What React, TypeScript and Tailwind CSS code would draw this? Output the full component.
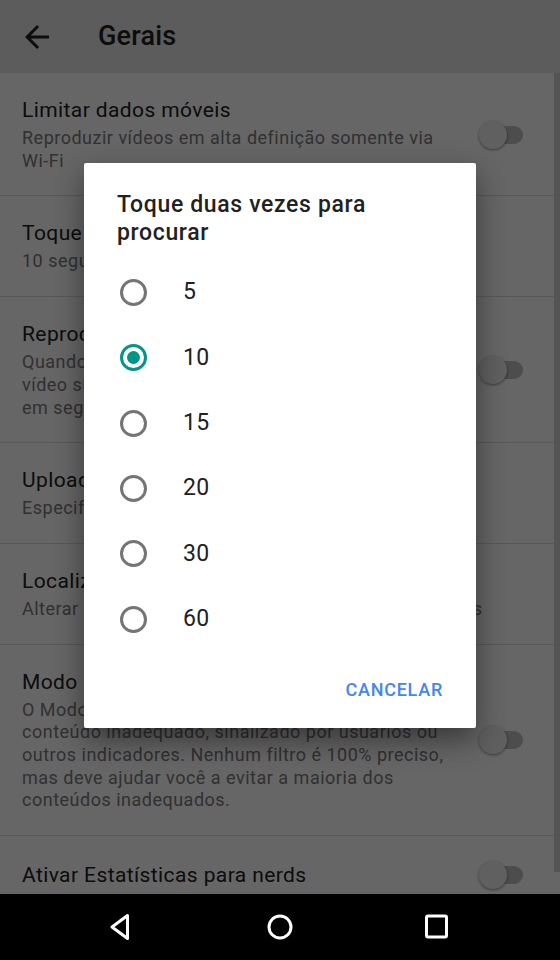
import React from "react";

const Toggle = () => (
  <div className="relative w-[44px] h-[30px] shrink-0">
    <div className="absolute left-[7px] top-[6px] w-[37px] h-[18px] rounded-full bg-[#c0c0c0]" />
    <div className="absolute left-0 top-[1px] w-[28px] h-[28px] rounded-full bg-[#f1f1f1] shadow-[0_1px_3px_rgba(0,0,0,0.45)]" />
  </div>
);

type RowProps = { title: string; lines?: string[]; toggle?: boolean };

const Row = ({ title, lines = [], toggle }: RowProps) => (
  <div className="flex items-center justify-between pl-[22px] pr-[37px] pt-[24px] pb-[23px] border-b border-[#dedede]">
    <div className={toggle ? "w-[440px]" : "w-[520px]"}>
      <div className="text-[21px] leading-[26px] tracking-[0.4px] text-[#212121] whitespace-nowrap">{title}</div>
      {lines.length > 0 && (
        <div className="mt-[4px] text-[18px] leading-[22.7px] tracking-[0.5px] text-[#7a7a7a]">
          {lines.map((l, i) => (
            <div key={i} className="whitespace-nowrap">{l}</div>
          ))}
        </div>
      )}
    </div>
    {toggle && <Toggle />}
  </div>
);

const Radio = ({ checked }: { checked?: boolean }) =>
  checked ? (
    <div className="w-[27px] h-[27px] rounded-full border-[3px] border-[#009688] flex items-center justify-center">
      <div className="w-[13px] h-[13px] rounded-full bg-[#009688]" />
    </div>
  ) : (
    <div className="w-[27px] h-[27px] rounded-full border-[3px] border-[#757575]" />
  );

export default function App() {
  const options = ["5", "10", "15", "20", "30", "60"];
  return (
    <div
      className="relative w-[560px] h-[960px] overflow-hidden bg-white"
      style={{ fontFamily: "Roboto, 'Noto Sans', Arial, sans-serif" }}
    >
      <div className="flex flex-col h-[894px]">
        {/* App bar */}
        <div className="h-[73px] shrink-0 bg-[#e6e6e6] flex items-center">
          <svg
            viewBox="0 0 24 24"
            className="w-[36px] h-[36px] ml-[19px]"
            fill="#212121"
          >
            <path d="M20 11H7.83l5.59-5.59L12 4l-8 8 8 8 1.41-1.41L7.83 13H20v-2z" />
          </svg>
          <div className="ml-[43px] text-[27px] tracking-[0.2px] font-medium text-[#212121]">Gerais</div>
        </div>

        {/* Settings list */}
        <div className="flex-1 bg-white">
          <Row
            title="Limitar dados móveis"
            lines={["Reproduzir vídeos em alta definição somente via", "Wi-Fi"]}
            toggle
          />
          <Row title="Toque duas vezes para procurar" lines={["10 segundos"]} />
          <Row
            title="Reprodução automática"
            lines={[
              "Quando um vídeo terminar, o próximo",
              "vídeo sugerido será reproduzido",
              "em seguida automaticamente",
            ]}
            toggle
          />
          <Row title="Uploads" lines={["Especificar preferências de rede para uploads"]} />
          <Row
            title="Localização"
            lines={["Alterar a região para ver os conteúdos e as tendências"]}
          />
          <Row
            title="Modo restrito"
            lines={[
              "O Modo restrito oculta vídeos que podem conter",
              "conteúdo inadequado, sinalizado por usuários ou",
              "outros indicadores. Nenhum filtro é 100% preciso,",
              "mas deve ajudar você a evitar a maioria dos",
              "conteúdos inadequados.",
            ]}
            toggle
          />
          <Row title="Ativar Estatísticas para nerds" toggle />
        </div>
      </div>

      {/* Scrollbar */}
      <div className="absolute right-0 top-[73px] w-[6px] h-[799px] bg-[#d2d2d2]" />

      {/* Scrim */}
      <div className="absolute inset-x-0 top-0 h-[894px] bg-black/60" />

      {/* Dialog */}
      <div className="absolute left-[84px] top-[163px] w-[392px] h-[565px] bg-white rounded-[2px] shadow-[0_12px_30px_rgba(0,0,0,0.45)] flex flex-col">
        <div className="pt-[28px] pl-[33px] pr-[20px] text-[23px] leading-[28px] tracking-[0.65px] font-medium text-[#212121]">
          Toque duas vezes para
          <br />
          procurar
        </div>
        <div className="mt-[13px] flex flex-col">
          {options.map((o) => (
            <div key={o} className="h-[65.3px] flex items-center pl-[36px]">
              <Radio checked={o === "10"} />
              <div className="ml-[36px] text-[23px] tracking-[0.4px] text-[#212121]">{o}</div>
            </div>
          ))}
        </div>
        <div className="flex-1 flex items-center justify-end pr-[33px]">
          <div className="text-[18px] font-medium tracking-[0.75px] text-[#4285f4]">CANCELAR</div>
        </div>
      </div>

      {/* Navigation bar */}
      <div className="absolute bottom-0 inset-x-0 h-[66px] bg-black flex items-center justify-center gap-[117px]">
        <svg viewBox="0 0 40 40" className="w-[40px] h-[40px]">
          <path
            d="M24.5 8.5 L9 20 L24.5 31.5 Z"
            fill="none"
            stroke="white"
            strokeWidth="3"
            strokeLinejoin="round"
          />
        </svg>
        <svg viewBox="0 0 40 40" className="w-[40px] h-[40px]">
          <circle cx="20" cy="20" r="11" fill="none" stroke="white" strokeWidth="3" />
        </svg>
        <svg viewBox="0 0 40 40" className="w-[40px] h-[40px]">
          <rect x="9.5" y="9" width="20" height="21" rx="1.5" fill="none" stroke="white" strokeWidth="3" />
        </svg>
      </div>
    </div>
  );
}
